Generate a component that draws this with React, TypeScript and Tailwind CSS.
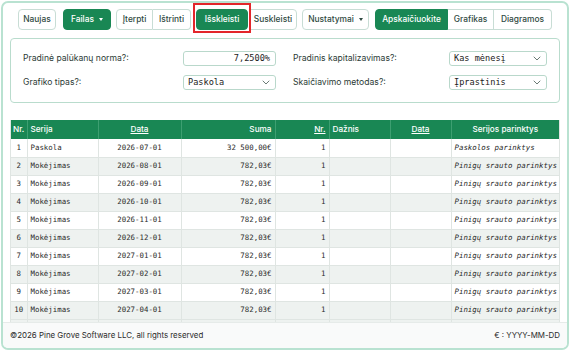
import React from 'react';

const rows = [
  { nr: 1, serija: 'Paskola', data: '2026-07-01', suma: '32 500,00€', kiek: 1, opt: 'Paskolos parinktys' },
  { nr: 2, serija: 'Mokėjimas', data: '2026-08-01', suma: '782,03€', kiek: 1, opt: 'Pinigų srauto parinktys' },
  { nr: 3, serija: 'Mokėjimas', data: '2026-09-01', suma: '782,03€', kiek: 1, opt: 'Pinigų srauto parinktys' },
  { nr: 4, serija: 'Mokėjimas', data: '2026-10-01', suma: '782,03€', kiek: 1, opt: 'Pinigų srauto parinktys' },
  { nr: 5, serija: 'Mokėjimas', data: '2026-11-01', suma: '782,03€', kiek: 1, opt: 'Pinigų srauto parinktys' },
  { nr: 6, serija: 'Mokėjimas', data: '2026-12-01', suma: '782,03€', kiek: 1, opt: 'Pinigų srauto parinktys' },
  { nr: 7, serija: 'Mokėjimas', data: '2027-01-01', suma: '782,03€', kiek: 1, opt: 'Pinigų srauto parinktys' },
  { nr: 8, serija: 'Mokėjimas', data: '2027-02-01', suma: '782,03€', kiek: 1, opt: 'Pinigų srauto parinktys' },
  { nr: 9, serija: 'Mokėjimas', data: '2027-03-01', suma: '782,03€', kiek: 1, opt: 'Pinigų srauto parinktys' },
  { nr: 10, serija: 'Mokėjimas', data: '2027-04-01', suma: '782,03€', kiek: 1, opt: 'Pinigų srauto parinktys' },
];

const Caret = () => (
  <span className="ml-[5px] inline-block w-0 h-0 border-l-[2.5px] border-r-[2.5px] border-t-[3px] border-l-transparent border-r-transparent border-t-current" />
);

const Chevron = () => (
  <svg width="8" height="5" viewBox="0 0 8 5" fill="none" className="text-[#6b7b75]">
    <path d="M1 1l3 3 3-3" stroke="currentColor" strokeWidth="1" strokeLinecap="round" />
  </svg>
);

function Select({ value, w }: { value: string; w: string }) {
  return (
    <div className={`${w} h-[15px] border border-[#b9d8cb] rounded-[3px] bg-white flex items-center justify-between pl-[4px] pr-[5px] font-['DejaVu_Sans_Mono',monospace] text-[8.6px] text-[#222]`}>
      <span>{value}</span>
      <Chevron />
    </div>
  );
}

export default function App() {
  const btn = 'h-[21px] flex items-center justify-center text-[8.4px] font-medium';
  const light = 'bg-white border border-[#c8ddd5] text-[#2f4a42]';
  const green = 'bg-[#198754] border border-[#198754] text-white';
  const cell = 'border-l border-[#dfe5e2]';
  const hcell = 'font-medium border-l border-[#3d9f71]';

  return (
    <div className="w-[570px] h-[351px] bg-white p-[1px] font-['Inter',sans-serif]">
      <div className="h-full border-2 border-[#b9e2d1] rounded-[7px] flex flex-col overflow-hidden">
        {/* Toolbar */}
        <div className="flex items-start pl-[15px] pt-[6px] h-[30px] shrink-0">
          <div className={`${btn} ${light} w-[38px] rounded-[4px]`}>Naujas</div>
          <div className={`${btn} ${green} w-[48px] rounded-[4px] ml-[7px]`}>
            Failas
            <Caret />
          </div>
          <div className="flex ml-[5px]">
            <div className={`${btn} ${light} w-[37px] rounded-l-[4px]`}>Įterpti</div>
            <div className={`${btn} ${light} w-[38px] rounded-r-[4px] border-l-0`}>Ištrinti</div>
          </div>
          <div className="flex ml-[5px]">
            <div className="relative">
              <div className={`${btn} ${green} w-[52px] rounded-[4px]`}>Išskleisti</div>
              <div className="absolute left-[-3px] top-[-6px] w-[58px] h-[30px] border-2 border-[#e3262b]" />
            </div>
            <div className={`${btn} ${light} w-[48px] rounded-r-[4px] ml-[1px]`}>Suskleisti</div>
          </div>
          <div className={`${btn} ${light} w-[67px] rounded-[4px] ml-[5px]`}>
            Nustatymai
            <Caret />
          </div>
          <div className="flex ml-[6px]">
            <div className={`${btn} ${green} w-[73px] rounded-l-[4px]`}>Apskaičiuokite</div>
            <div className={`${btn} ${light} w-[46px] border-l-0`}>Grafikas</div>
            <div className={`${btn} ${light} w-[58px] rounded-r-[4px] border-l-0`}>Diagramos</div>
          </div>
        </div>

        {/* Settings */}
        <div className="mx-[7px] mt-[5px] h-[65px] shrink-0 border border-[#b9dccd] rounded-[4px] flex items-start pt-[12px] pl-[12px] text-[8.6px] text-[#2b3a35]">
          <div className="flex flex-col gap-[9px]">
            <div className="flex items-center h-[15px]">
              <span className="w-[160px]">Pradinė palūkanų norma?:</span>
              <div className="w-[93px] h-[15px] border border-[#b9d8cb] rounded-[3px] bg-white flex items-center justify-end pr-[5px] font-['DejaVu_Sans_Mono',monospace] text-[8.6px] text-[#222]">
                7,2500%
              </div>
            </div>
            <div className="flex items-center h-[15px]">
              <span className="w-[160px]">Grafiko tipas?:</span>
              <Select value="Paskola" w="w-[93px]" />
            </div>
          </div>
          <div className="flex flex-col gap-[9px] ml-[17px]">
            <div className="flex items-center h-[15px]">
              <span className="w-[156px]">Pradinis kapitalizavimas?:</span>
              <Select value="Kas mėnesį" w="w-[98px]" />
            </div>
            <div className="flex items-center h-[15px]">
              <span className="w-[156px]">Skaičiavimo metodas?:</span>
              <Select value="Įprastinis" w="w-[98px]" />
            </div>
          </div>
        </div>

        {/* Table */}
        <div className="mx-[7px] mt-[17px] h-[202px] shrink-0 overflow-hidden border-l border-r border-[#dfe5e2]">
          <table className="w-full table-fixed border-collapse">
            <colgroup>
              <col className="w-[16px]" />
              <col className="w-[71px]" />
              <col className="w-[83px]" />
              <col className="w-[94px]" />
              <col className="w-[54px]" />
              <col className="w-[61px]" />
              <col className="w-[61px]" />
              <col />
            </colgroup>
            <thead>
              <tr className="h-[19px] bg-[#198754] text-white text-[8.2px]">
                <th className="text-left pl-[2px] font-medium">Nr.</th>
                <th className={`text-left pl-[3px] ${hcell}`}>Serija</th>
                <th className={`text-center underline ${hcell}`}>Data</th>
                <th className={`text-right pr-[3px] ${hcell}`}>Suma</th>
                <th className={`text-right pr-[3px] underline ${hcell}`}>Nr.</th>
                <th className={`text-left pl-[3px] ${hcell}`}>Dažnis</th>
                <th className={`text-center underline ${hcell}`}>Data</th>
                <th className={`text-center ${hcell}`}>Serijos parinktys</th>
              </tr>
            </thead>
            <tbody className="font-['DejaVu_Sans_Mono',monospace] text-[7.4px] text-[#2a2a2a]">
              {rows.map((r, i) => (
                <tr key={r.nr} className={`h-[18px] border-b border-[#dfe5e2] ${i % 2 === 1 ? 'bg-[#eef2f0]' : 'bg-white'}`}>
                  <td className="text-center">{r.nr}</td>
                  <td className={`pl-[3px] ${cell}`}>{r.serija}</td>
                  <td className={`text-center ${cell}`}>{r.data}</td>
                  <td className={`text-right pr-[3px] ${cell}`}>{r.suma}</td>
                  <td className={`text-right pr-[3px] ${cell}`}>{r.kiek}</td>
                  <td className={cell}></td>
                  <td className={cell}></td>
                  <td className={`pl-[3px] italic whitespace-nowrap ${cell}`}>{r.opt}</td>
                </tr>
              ))}
              <tr className="h-[18px] bg-[#eef2f0]">
                <td></td>
                <td className={cell}></td>
                <td className={cell}></td>
                <td className={cell}></td>
                <td className={cell}></td>
                <td className={cell}></td>
                <td className={cell}></td>
                <td className={cell}></td>
              </tr>
            </tbody>
          </table>
        </div>

        {/* Footer */}
        <div className="flex-1 bg-[#f9fafa] border-t border-[#e6ebe9] flex items-center justify-between px-[7px] text-[7.9px] text-[#2b2b2b]">
          <span>©2026 Pine Grove Software LLC, all rights reserved</span>
          <span>€ : YYYY-MM-DD</span>
        </div>
      </div>
    </div>
  );
}
